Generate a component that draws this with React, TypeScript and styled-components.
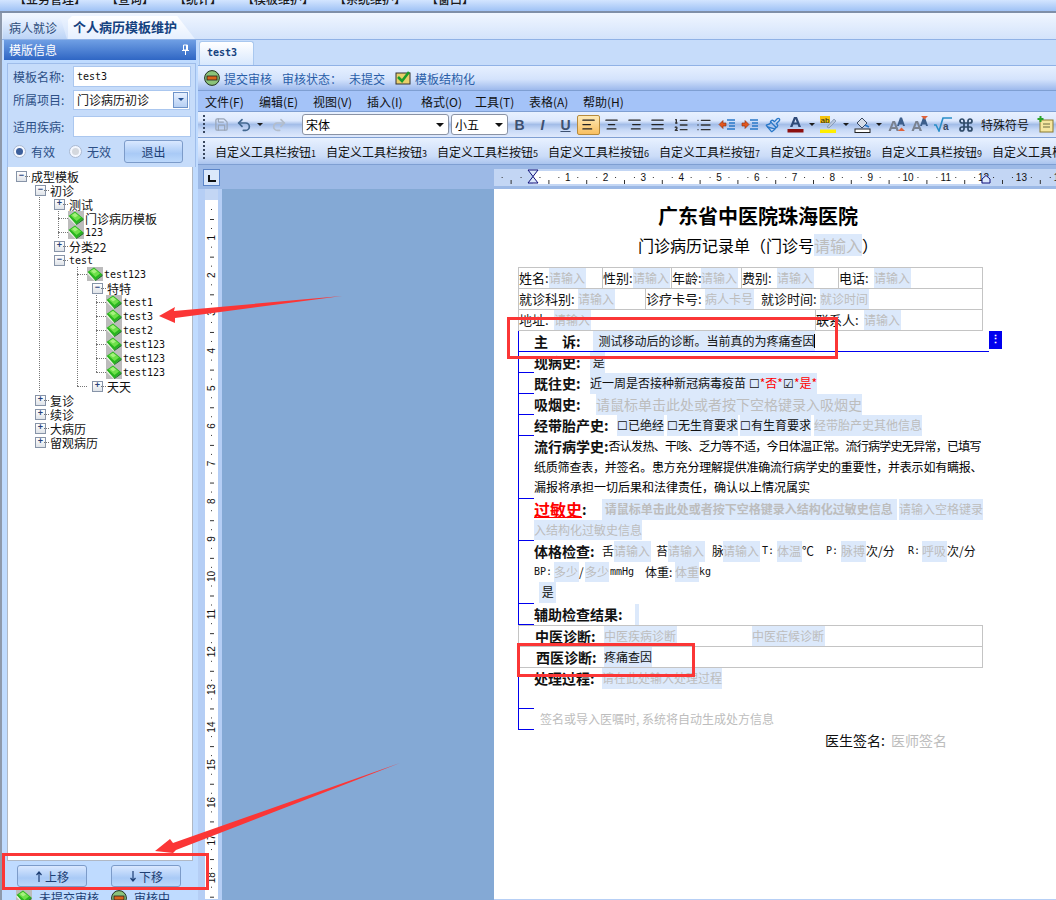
import React from "react";
import styled, { createGlobalStyle } from "styled-components";
import { AlignCenter, AlignJustify, AlignLeft, AlignRight, Command, List, ListOrdered, Paintbrush, Redo2, Save, Undo2 } from "lucide-react";

const CJK = `"Noto Sans CJK SC", "Liberation Sans", sans-serif`;
const MONO = `"DejaVu Sans Mono", "Liberation Mono", "Noto Sans CJK SC", monospace`;

const Global = createGlobalStyle`
  html, body { margin: 0; padding: 0; background: #fff; }
  body { font-family: ${CJK}; font-size: 12px; color: #000; }
  * { box-sizing: border-box; }
`;

const Shell = styled.div`
  position: relative; width: 1056px; height: 900px; overflow: hidden; background: #bfdbff;
`;
const TopMenu = styled.div`
  height: 13px; background: linear-gradient(#d3e5ff, #9fc2f5 85%, #7f8fa8 85%); display: flex; overflow: hidden;
  padding-left: 14px; align-items: flex-start;
`;
const TopItem = styled.span<{ $w: number }>`
  width: ${p => p.$w}px; flex: none; font-size: 12px; line-height: 16px; font-weight: 500; color: #1b1b1b;
  white-space: nowrap; margin-top: -9px;
`;
const Frame = styled.div`
  height: 887px; border-left: 2px solid #8e99ab; background: #bfdbff;
`;
const TabStrip = styled.div`
  height: 27px; display: flex; align-items: flex-end; padding-left: 1px;
  background: linear-gradient(#f0f6ff, #d3e3fb); border-bottom: 1px solid #90b2e6;
`;
const MainTab = styled.div<{ $active?: boolean }>`
  height: ${p => (p.$active ? 23 : 21)}px; padding-left: ${p => (p.$active ? 5 : 6)}px;
  width: ${p => (p.$active ? 127 : 64)}px; margin-right: 1px; white-space: nowrap;
  font-size: ${p => (p.$active ? 13 : 12)}px; font-weight: ${p => (p.$active ? 700 : 400)};
  line-height: ${p => (p.$active ? 21 : 19)}px; color: ${p => (p.$active ? "#15427f" : "#2b4a78")};
  background: ${p => (p.$active ? "linear-gradient(#ffffff, #e6f0ff)" : "linear-gradient(#eaf2ff, #bcd4f6)")};
  clip-path: polygon(0 100%, 0 4px, 4px 0, ${p => (p.$active ? "86%" : "90%")} 0, 100% 100%);
`;
const Main = styled.div`
  display: flex; height: 860px;
`;
const Sidebar = styled.aside`
  width: 192px; margin-left: 2px; display: flex; flex-direction: column; background: #bfdbff; flex: none;
`;
const PanelHead = styled.div`
  height: 20px; padding: 0 6px 0 5px; display: flex; align-items: center; justify-content: space-between;
  color: #fff; font-size: 12px; background: linear-gradient(#6f9fe4, #2f66c4);
`;
const Form = styled.div`
  margin: 3px 0 0 3px; height: 105px; border: 1px solid #9fbdea; border-bottom: 0; padding: 2px 0 0 5px;
  display: flex; flex-direction: column; background: #c6dcfa;
`;
const FormRow = styled.div<{ $h: number; $mt?: number }>`
  height: ${p => p.$h}px; margin-top: ${p => p.$mt ?? 0}px; display: flex; align-items: center;
`;
const FieldLabel = styled.label`
  width: 60px; flex: none; color: #2c4f86; font-size: 12px; white-space: nowrap;
`;
const TextInput = styled.div<{ $w?: number }>`
  width: ${p => p.$w ?? 118}px; height: 100%; background: #fff; border: 1px solid #abc7ef; padding-left: 3px;
  display: flex; align-items: center; justify-content: space-between; font-size: 12px; color: #111;
`;
const MonoValue = styled.span`
  font-family: ${MONO}; font-size: 10px; color: #111;
`;
const ComboArrow = styled.span`
  width: 15px; height: 16px; margin-right: 1px; border: 1px solid #6f93c8; display: flex; align-items: center; justify-content: center;
  background: linear-gradient(#e7f0ff, #b6cff3);
  &::after { content: ""; border: 3px solid transparent; border-top: 3px solid #234e90; margin-top: 3px; }
`;
const RadioLabel = styled.span<{ $w: number }>`
  width: ${p => p.$w}px; display: flex; align-items: center; gap: 5px; color: #2c4f86; font-size: 12px;
`;
const RadioDot = styled.span<{ $on?: boolean }>`
  width: 13px; height: 13px; border-radius: 50%; border: 1px solid #a9b9d2; display: flex; align-items: center; justify-content: center;
  background: #f3f7ff;
  &::after { content: ""; width: 7px; height: 7px; border-radius: 50%; background: ${p => (p.$on ? "#3c5f9c" : "#d4d8de")}; }
`;
const SideButton = styled.button<{ $w: number; $h: number }>`
  width: ${p => p.$w}px; height: ${p => p.$h}px; padding: 0; font-family: ${CJK}; font-size: 12px; color: #1e3f74;
  border: 1px solid #7c9bc9; border-radius: 3px; background: linear-gradient(#d9e8ff, #a9caf6 60%, #bcd8fb);
`;
const Tree = styled.div`
  margin: 0 0 0 3px; width: 186px; height: 694px; background: #fff; border: 1px solid #b0b8c4; border-top: 0; padding: 2px 0 0 3px; overflow: hidden; flex: none;
`;
const TreeRow = styled.div`
  height: 14px; display: flex; align-items: center;
`;
const Cell = styled.span<{ $v?: "I" | "T" | "L" | "" }>`
  position: relative; width: 19px; height: 14px; flex: none;
  ${p => (p.$v === "I" || p.$v === "T" ? "background: repeating-linear-gradient(#777 0 1px, transparent 1px 2px) 9px 0 / 1px 100% no-repeat;" : "")}
  ${p => (p.$v === "L" ? "background: repeating-linear-gradient(#777 0 1px, transparent 1px 2px) 9px 0 / 1px 50% no-repeat;" : "")}
  ${p => (p.$v === "T" || p.$v === "L" ? `&::after { content: ""; position: absolute; left: 9px; right: 0; top: 7px; border-top: 1px dotted #777; }` : "")}
`;
const Expander = styled.span<{ $open?: boolean }>`
  position: relative; width: 19px; height: 14px; flex: none;
  &::before {
    content: "${p => (p.$open ? "−" : "+")}"; position: absolute; left: 5px; top: 2px; width: 9px; height: 9px;
    border: 1px solid #8794a8; background: linear-gradient(#fff, #dfe3e8); color: #27407a;
    font: 700 9px/7px "Liberation Sans", sans-serif; text-align: center;
  }
  &::after { content: ""; position: absolute; left: 14px; right: 0; top: 7px; border-top: 1px dotted #777; }
`;
const NodeText = styled.span<{ $mono?: boolean }>`
  white-space: nowrap; margin-left: 1px; color: #111;
  font-family: ${p => (p.$mono ? MONO : CJK)}; font-size: ${p => (p.$mono ? 10 : 12)}px;
`;
const BottomBar = styled.div`
  height: 29px; display: flex; align-items: center; gap: 24px; padding: 1px 0 0 13px; flex: none;
`;
const Legend = styled.div`
  height: 10px; display: flex; align-items: flex-start; padding-left: 12px; overflow: visible; color: #1e3f74; font-size: 12px; line-height: 15px; flex: none;
`;
const LegendItem = styled.span<{ $w: number }>`
  width: ${p => p.$w}px; display: flex; gap: 7px; white-space: nowrap;
`;

const Editor = styled.section`
  margin-left: 2px; width: 858px; display: flex; flex-direction: column; flex: none; height: 860px;
`;
const DocTabs = styled.div`
  height: 26px; padding-left: 1px; display: flex; align-items: flex-end; background: #c6dcfa; border-bottom: 1px solid #90b2e6; flex: none;
`;
const DocTab = styled.div`
  width: 55px; height: 24px; border: 1px solid #a9c8ef; border-bottom: 0; border-radius: 3px 3px 0 0; background: linear-gradient(#ffffff, #d8e8fd);
  font: 700 10px/22px ${MONO}; color: #15427f; padding-left: 7px;
`;
const AuditBar = styled.div`
  height: 25px; display: flex; align-items: center; padding-left: 6px; background: linear-gradient(#e6f0ff, #d4e3fc 55%, #9db9ec); color: #2a5ea8; font-size: 12px; white-space: nowrap; flex: none; border-bottom: 1px solid #7f9fd2;
`;
const AuditText = styled.span<{ $ml: number }>`
  margin-left: ${p => p.$ml}px; color: #2a5ea8; display: flex;
`;
const MenuBar = styled.nav`
  height: 21px; background: #a4c3f8; display: flex; gap: 14px; padding-left: 7px; align-items: center; flex: none; border-bottom: 1px solid #7f9fd2; color: #111;
`;
const MenuItem = styled.span`
  width: 40px; white-space: nowrap; font-size: 12px;
`;
const Toolbar = styled.div`
  height: 26px; display: flex; align-items: center; flex: none; overflow: hidden; padding-left: 5px;
  background: linear-gradient(#e8f1ff 0, #dce8fd 35%, #a3bde8 50%, #c6d8f6 70%, #dfe9fc 100%); border-bottom: 1px solid #7f9fd2;
`;
const Toolbar3 = styled(Toolbar)`
  height: 27px; background: linear-gradient(#e8f1ff, #cbdcf8 70%, #aac4ee); gap: 10px;
`;
const Grip = styled.span<{ $mr: number }>`
  width: 2px; height: 20px; flex: none; margin-right: ${p => p.$mr}px;
  background: repeating-linear-gradient(#38475f 0 2px, transparent 2px 4px);
`;
const Tool = styled.span<{ $w?: number; $active?: boolean; $ml?: number }>`
  width: ${p => p.$w ?? 23}px; height: 20px; margin-left: ${p => p.$ml ?? 0}px; display: flex; align-items: center; justify-content: center; flex: none;
  ${p => (p.$active ? "background: linear-gradient(#fde9b5, #f9bf60); border: 1px solid #b68a3c; border-radius: 2px;" : "")}
`;
const ToolLetter = styled.span<{ $i?: boolean; $u?: boolean }>`
  font: ${p => (p.$i ? "italic 700" : "700")} 14px "Liberation Sans", sans-serif; color: #3d5070;
  text-decoration: ${p => (p.$u ? "underline" : "none")};
`;
const Drop = styled.span<{ $w?: number }>`
  width: ${p => p.$w ?? 10}px; flex: none; display: flex; justify-content: center;
  &::after { content: ""; border: 3px solid transparent; border-top: 3px solid #1c1c1c; margin-top: 3px; }
`;
const Combo = styled.div<{ $w: number; $mr: number }>`
  width: ${p => p.$w}px; height: 21px; margin-right: ${p => p.$mr}px; background: #fff; border: 1px solid #8a93a5; border-radius: 3px; display: flex; align-items: center; justify-content: space-between; padding: 0 4px 0 3px; font-size: 12px; flex: none;
  &::after { content: ""; border: 4px solid transparent; border-top: 4px solid #111; margin-top: 4px; }
`;
const CustomBtn = styled.span<{ $ml?: number }>`
  flex: none; white-space: nowrap; font-size: 12px; color: #111; margin-left: ${p => p.$ml ?? 0}px;
`;
const SmallDigit = styled.span`
  font-size: 9px;
`;
const RulerRow = styled.div`
  height: 24px; background: #9cb9e6; display: flex; align-items: center; padding-left: 5px; flex: none;
`;
const CornerBtn = styled.div`
  width: 17px; height: 17px; border: 1px solid #5b85c9; background: #dbe8fb; position: relative; margin-right: 274px; flex: none;
  &::after { content: ""; position: absolute; left: 4px; top: 5px; width: 6px; height: 5px; border-left: 2px solid #111; border-bottom: 2px solid #111; }
`;
const Body = styled.div`
  flex: 1; min-height: 0; display: flex; background: #b7cff5;
`;
const Gutter = styled.div`
  width: 7px; flex: none; background: #b5cef5;
`;
const VRuler = styled.div`
  width: 17px; flex: none; background: #b5cef5; padding-right: 4px; overflow: hidden; height: 710px;
`;
const Canvas = styled.div`
  flex: none; width: 272px; background: #84a9d5;
`;
const Page = styled.div`
  flex: 1; background: #fff; padding-left: 24px; padding-top: 17px; height: 710px; overflow: hidden;
`;
const Title = styled.h1`
  margin: 0; width: 480px; text-align: center; height: 20px; font: 700 20px/20px ${CJK}; color: #000;
`;
const Subtitle = styled.h2`
  margin: 8px 0 0; width: 480px; text-align: center; height: 22px; font: 400 16px/22px ${CJK}; color: #000;
`;
const Ph = styled.span<{ $w?: number; $bold?: boolean; $size?: number; $ml?: number }>`
  display: inline-block; height: 100%; background: #dce9fb; color: #bdbdbd; white-space: nowrap; text-align: left; flex: none;
  ${p => (p.$w ? `width: ${p.$w}px;` : "")}
  margin-left: ${p => p.$ml ?? 0}px;
  font-size: ${p => p.$size ?? 12}px; font-weight: ${p => (p.$bold ? 700 : 400)};
`;
const Hint = styled.span`
  margin-left: 6px; color: #bdbdbd; white-space: nowrap; font-size: 12px;
`;
const GridTable = styled.div<{ $mt?: number }>`
  width: 465px; margin-top: ${p => p.$mt ?? 11}px; border: 1px solid #c4c4c4; border-bottom: 0;
`;
const TR = styled.div`
  height: 21px; display: flex; border-bottom: 1px solid #c4c4c4; line-height: 20px;
`;
const TD = styled.div<{ $w?: number; $line?: boolean }>`
  ${p => (p.$w ? `width: ${p.$w}px; flex: none;` : "flex: 1;")}
  display: flex; height: 20px; overflow: visible;
  ${p => (p.$line ? "border-right: 1px solid #c4c4c4;" : "")}
`;
const Lab = styled.span<{ $w: number; $size?: number; $bold?: boolean; $ml?: number; $pl?: number }>`
  width: ${p => p.$w}px; flex: none; white-space: nowrap; font-size: ${p => p.$size ?? 13}px; font-weight: ${p => (p.$bold ? 700 : 400)}; color: #111;
  margin-left: ${p => p.$ml ?? 0}px; padding-left: ${p => p.$pl ?? 0}px;
`;
const Section = styled.div<{ $h: number }>`
  position: relative; width: 465px; height: ${p => p.$h}px; padding-left: 15px; border-left: 1px solid #0000ee; line-height: 20.6px;
  &::after { content: ""; position: absolute; left: 0; bottom: 0; width: 15px; border-bottom: 1px solid #0000ee; }
`;
const Line = styled.div<{ $tight?: number }>`
  display: flex; height: 20.6px; white-space: nowrap; letter-spacing: ${p => p.$tight ?? 0}px; font-size: 12px;
`;
const Head = styled.span<{ $w?: number }>`
  ${p => (p.$w ? `width: ${p.$w}px;` : "")} flex: none; white-space: nowrap; font-weight: 700; font-size: 14px; letter-spacing: 0; color: #111;
`;
const RedHead = styled.span`
  flex: none; font-weight: 700; font-size: 16px; color: #f00; text-decoration: underline; line-height: 20px;
`;
const Val = styled.span<{ $bg?: boolean; $red?: boolean; $ml?: number; $mono?: boolean; $w?: number }>`
  display: inline-block; flex: none; margin-left: ${p => p.$ml ?? 0}px; color: ${p => (p.$red ? "#f00" : "#111")};
  ${p => (p.$bg ? "background: #dce9fb;" : "")}
  ${p => (p.$w ? `width: ${p.$w}px;` : "")}
  ${p => (p.$mono ? `font-family: ${MONO}; font-size: 10px;` : "")}
`;
const ActiveBar = styled.div`
  position: absolute; left: 0; top: 0; height: 21px; width: 470px; border-bottom: 1px solid #0000ee; pointer-events: none;
`;
const FocusHandle = styled.div`
  position: absolute; left: 470px; top: 0; width: 13px; height: 18px; background: #0000ee; color: #fff; font: 700 11px/16px "Liberation Sans", sans-serif; text-align: center;
`;
const Caret = styled.span`
  display: inline-block; width: 1px; height: 14px; background: #000; vertical-align: -2px;
`;
const SignLine = styled.div`
  display: flex; width: 465px; height: 22px; margin-top: -1px; padding-left: 307px; font-size: 14px; line-height: 22px; color: #111; white-space: nowrap;
`;
const SignHint = styled.span`
  margin-left: 6px; color: #bdbdbd;
`;
const RedFrame = styled.div<{ $x: number; $y: number; $w: number; $h: number }>`
  position: absolute; left: ${p => p.$x}px; top: ${p => p.$y}px; width: ${p => p.$w}px; height: ${p => p.$h}px; border: 3px solid #fb3636; pointer-events: none;
`;
const ArrowLayer = styled.svg`
  position: absolute; left: 0; top: 0; pointer-events: none;
`;

const Book = () => (
  <svg width="16" height="14" viewBox="0 0 16 14" style={{ flex: "none" }}>
    <rect width="16" height="14" fill="#bcbcbc" />
    <polygon points="0.5,5 7,0.5 15.5,7.5 8,13.5" fill="#29b51f" />
    <polygon points="2.5,4.5 7,1.5 13,6.5 8.5,10" fill="#6ee04a" />
    <polygon points="4,4 7,2 10,4.5 7,6.5" fill="#a6f07e" />
    <polygon points="0.5,5 8,13.5 7.5,14 0.5,7" fill="#eef7e6" />
    <polygon points="8,13.5 15.5,7.5 15.5,9 8.5,14" fill="#12751a" />
  </svg>
);
const StopBadge = ({ s = 16 }: { s?: number }) => (
  <svg width={s} height={s} viewBox="0 0 16 16" style={{ flex: "none" }}>
    <circle cx="8" cy="8" r="7.4" fill="#8bc37a" stroke="#1f2f1f" />
    <rect x="3" y="6" width="10" height="4" fill="#d8641a" stroke="#222" strokeWidth="0.8" />
  </svg>
);
const CheckDoc = () => (
  <svg width="16" height="16" viewBox="0 0 16 16" style={{ flex: "none" }}>
    <rect x="1" y="3" width="14" height="11" fill="#e9cf6a" stroke="#333" />
    <path d="M3 7 L7 11 L14 2" fill="none" stroke="#1c9c2a" strokeWidth="2.6" />
  </svg>
);
const Pin = () => (
  <svg width="9" height="11" viewBox="0 0 9 11"><path d="M2.5 1H6.5V6H2.5ZM1 6.5H8M4.5 7V11M5.5 1V6" fill="none" stroke="#fff" /></svg>
);
const Arrow = ({ up }: { up?: boolean }) => (
  <svg width="8" height="11" viewBox="0 0 8 11" style={{ marginRight: 2 }}>
    <path d={up ? "M4 11V2M1.5 4L4 1L6.5 4" : "M4 0V9M1.5 7L4 10L6.5 7"} stroke="#1e3f74" strokeWidth="1.2" fill="none" />
  </svg>
);
const Ind = ({ flip }: { flip?: boolean }) => (
  <svg width="18" height="14" viewBox="0 0 18 14">
    <path d="M9 2H17M11 5H17M11 8H17M9 11H17" stroke="#2a78c8" strokeWidth="1.3" />
    <path d={flip ? "M1 5H4V2.5L8 6.5L4 10.5V8H1Z" : "M8 5H5V2.5L1 6.5L5 10.5V8H8Z"} fill="#e2561e" stroke="#8a2c0a" strokeWidth="0.6" />
  </svg>
);
const FontColor = () => (
  <svg width="17" height="17" viewBox="0 0 17 17">
    <path d="M3 11L7 1H10L14 11H11.5L10.6 8.5H6.4L5.5 11ZM7.2 6.5H9.8L8.5 3Z" fill="#2f4a78" />
    <rect x="0.5" y="13" width="16" height="3.5" fill="#8c0f0f" />
  </svg>
);
const Highlight = () => (
  <svg width="17" height="17" viewBox="0 0 17 17">
    <rect x="0" y="0" width="10" height="7" fill="#f4c20d" />
    <text x="0.5" y="7" fontSize="8" fontFamily="Liberation Sans" fill="#222">ab</text>
    <path d="M7 11L14 3L16 5L9 12Z" fill="#b8c7de" stroke="#6d7f9c" strokeWidth="0.6" />
    <rect x="0" y="13.5" width="16" height="3.5" fill="#ffee00" />
  </svg>
);
const PaintBucket = () => (
  <svg width="17" height="17" viewBox="0 0 17 17">
    <path d="M3 7L8 2L13 7L8 12Z" fill="#d6dde8" stroke="#3a4a62" />
    <path d="M11 9L15 11" stroke="#2a78c8" strokeWidth="1.6" />
    <rect x="1" y="13" width="15" height="3.5" fill="#fff" stroke="#222" />
  </svg>
);
const GrowA = ({ down }: { down?: boolean }) => (
  <svg width="18" height="17" viewBox="0 0 18 17">
    <path d="M0.5 15L4.5 5H7L11 15H8.6L7.9 13H3.6L2.9 15ZM4.3 11H7.2L5.8 7Z" fill="#7a8290" />
    <path d="M9 10L12 1.5H14L17 10H15L14.6 8.5H11.4L11 10Z" fill="#3d5f8c" />
    <path d={down ? "M10 0H17L13.5 3.5Z" : "M10 15L13.5 11.5L17 15Z"} fill="#e0623a" />
  </svg>
);
const Sqrt = () => (
  <svg width="18" height="15" viewBox="0 0 18 15">
    <path d="M0 8H2L5 14L9 1H18" fill="none" stroke="#2a8ec8" strokeWidth="1.6" />
    <text x="9" y="13" fontSize="10" fontWeight="700" fontFamily="Liberation Sans" fill="#3a4a62">a</text>
  </svg>
);
const Note = () => (
  <svg width="17" height="17" viewBox="0 0 17 17">
    <rect x="3" y="4" width="13" height="12" fill="#f6e7a0" stroke="#8a7a30" />
    <path d="M6 8H13M6 11H13" stroke="#6c6c40" />
    <path d="M0.5 3H6.5M3.5 0V6" stroke="#29a329" strokeWidth="2" />
  </svg>
);

const HRuler = () => {
  const items = [];
  for (let i = -1; i <= 14; i++) {
    const x = 36 + 37.8 * i;
    if (i > 0) items.push(<text key={`n${i}`} x={x} y="12" fontSize="10" textAnchor="middle" fontFamily="Liberation Sans" fill="#111">{i}</text>);
    [9.45, 18.9, 28.35].forEach((d, k) => {
      if (k === 1) items.push(<rect key={`t${i}${k}`} x={x + d - 0.5} y="11" width="1" height="4" fill="#333" />);
      else items.push(<rect key={`t${i}${k}`} x={x + d} y="8" width="1" height="1" fill="#333" />);
    });
  }
  return (
    <svg width="562" height="17" viewBox="0 0 562 17" style={{ flex: "none" }}>
      <rect width="562" height="17" fill="#c3d6f4" />
      <rect x="39" y="2" width="448" height="13" fill="#fff" />
      {items}
      <path d="M34 1H44L39 7.5L44 14H34L39 7.5Z" fill="#dbe8fb" stroke="#10107a" />
      <path d="M488 14H496V10L492 6.5L488 10Z" fill="#dbe8fb" stroke="#10107a" />
    </svg>
  );
};
const VerticalRuler = () => {
  const items = [];
  for (let i = 0; i <= 18; i++) {
    const y = 11 + 37.65 * i;
    if (i > 0) items.push(<text key={`n${i}`} transform={`translate(10 ${y}) rotate(-90)`} fontSize="10" textAnchor="middle" fontFamily="Liberation Sans" fill="#111">{i}</text>);
    items.push(<rect key={`a${i}`} x="6" y={y + 9} width="1" height="1" fill="#333" />);
    items.push(<rect key={`b${i}`} x="5" y={y + 19} width="4" height="1" fill="#333" />);
    items.push(<rect key={`c${i}`} x="6" y={y + 28} width="1" height="1" fill="#333" />);
  }
  return (
    <svg width="13" height="710" viewBox="0 0 13 710" style={{ display: "block" }}>
      <rect width="13" height="710" fill="#fff" />
      <rect width="13" height="11" fill="#c3d6f4" />
      {items}
    </svg>
  );
};

type V = "I" | "T" | "L" | "";
type Node = { g: V[]; exp?: "o" | "c"; leaf?: boolean; t: string; mono?: boolean };
const nodes: Node[] = [
  { g: [], exp: "o", t: "成型模板" },
  { g: [""], exp: "o", t: "初诊" },
  { g: ["", "I"], exp: "c", t: "测试" },
  { g: ["", "I", "T"], leaf: true, t: "门诊病历模板" },
  { g: ["", "I", "T"], leaf: true, t: "123", mono: true },
  { g: ["", "I"], exp: "c", t: "分类22" },
  { g: ["", "I"], exp: "o", t: "test", mono: true },
  { g: ["", "I", "", "T"], leaf: true, t: "test123", mono: true },
  { g: ["", "I", "", "I"], exp: "o", t: "特特" },
  { g: ["", "I", "", "I", "T"], leaf: true, t: "test1", mono: true },
  { g: ["", "I", "", "I", "T"], leaf: true, t: "test3", mono: true },
  { g: ["", "I", "", "I", "T"], leaf: true, t: "test2", mono: true },
  { g: ["", "I", "", "I", "T"], leaf: true, t: "test123", mono: true },
  { g: ["", "I", "", "I", "T"], leaf: true, t: "test123", mono: true },
  { g: ["", "I", "", "I", "L"], leaf: true, t: "test123", mono: true },
  { g: ["", "I", "", "L"], exp: "c", t: "天天" },
  { g: [""], exp: "c", t: "复诊" },
  { g: [""], exp: "c", t: "续诊" },
  { g: [""], exp: "c", t: "大病历" },
  { g: [""], exp: "c", t: "留观病历" },
];

export default function App() {
  return (
    <Shell>
      <Global />
      <TopMenu>
        <TopItem $w={92}>【业务管理】</TopItem>
        <TopItem $w={68}>【查询】</TopItem>
        <TopItem $w={68}>【统计】</TopItem>
        <TopItem $w={92}>【模板维护】</TopItem>
        <TopItem $w={92}>【系统维护】</TopItem>
        <TopItem $w={60}>【窗口】</TopItem>
      </TopMenu>
      <Frame>
        <TabStrip>
          <MainTab>病人就诊</MainTab>
          <MainTab $active>个人病历模板维护</MainTab>
        </TabStrip>
        <Main>
          <Sidebar>
            <PanelHead>模版信息<Pin /></PanelHead>
            <Form>
              <FormRow $h={21}><FieldLabel>模板名称:</FieldLabel><TextInput><MonoValue>test3</MonoValue></TextInput></FormRow>
              <FormRow $h={20} $mt={3}><FieldLabel>所属项目:</FieldLabel><TextInput $w={117}>门诊病历初诊<ComboArrow /></TextInput></FormRow>
              <FormRow $h={21} $mt={6}><FieldLabel>适用疾病:</FieldLabel><TextInput /></FormRow>
              <FormRow $h={23} $mt={3}>
                <RadioLabel $w={56}><RadioDot $on />有效</RadioLabel>
                <RadioLabel $w={55}><RadioDot />无效</RadioLabel>
                <SideButton $w={59} $h={23}>退出</SideButton>
              </FormRow>
            </Form>
            <Tree>
              {nodes.map((n, i) => (
                <TreeRow key={i}>
                  {n.g.map((v, k) => <Cell key={k} $v={v} />)}
                  {n.exp && <Expander $open={n.exp === "o"} />}
                  {n.leaf && <Book />}
                  <NodeText $mono={n.mono}>{n.t}</NodeText>
                </TreeRow>
              ))}
            </Tree>
            <BottomBar>
              <SideButton $w={70} $h={22}><Arrow up />上移</SideButton>
              <SideButton $w={70} $h={22}><Arrow />下移</SideButton>
            </BottomBar>
            <Legend>
              <LegendItem $w={95}><Book />未提交审核</LegendItem>
              <LegendItem $w={70}><StopBadge />审核中</LegendItem>
            </Legend>
          </Sidebar>
          <Editor>
            <DocTabs><DocTab>test3</DocTab></DocTabs>
            <AuditBar>
              <StopBadge />
              <AuditText $ml={4}>提交审核</AuditText>
              <AuditText $ml={10}>审核状态：</AuditText>
              <AuditText $ml={7}>未提交</AuditText>
              <AuditText $ml={10}><CheckDoc /></AuditText>
              <AuditText $ml={4}>模板结构化</AuditText>
            </AuditBar>
            <MenuBar>
              {["文件(F)", "编辑(E)", "视图(V)", "插入(I)", "格式(O)", "工具(T)", "表格(A)", "帮助(H)"].map(m => <MenuItem key={m}>{m}</MenuItem>)}
            </MenuBar>
            <Toolbar>
              <Grip $mr={7} />
              <Tool $w={19}><Save size={15} color="#9aa6b8" /></Tool>
              <Tool $w={26}><Undo2 size={16} color="#42678f" strokeWidth={2.6} /></Tool>
              <Drop $w={6} />
              <Tool $w={32}><Redo2 size={16} color="#b3bdcb" strokeWidth={2.6} /></Tool>
              <Tool $w={7} />
              <Combo $w={147} $mr={2}>宋体</Combo>
              <Combo $w={57} $mr={0}>小五</Combo>
              <Tool><ToolLetter>B</ToolLetter></Tool>
              <Tool><ToolLetter $i>I</ToolLetter></Tool>
              <Tool><ToolLetter $u>U</ToolLetter></Tool>
              <Tool $active><AlignLeft size={15} color="#222" /></Tool>
              <Tool><AlignCenter size={15} color="#222" /></Tool>
              <Tool><AlignRight size={15} color="#222" /></Tool>
              <Tool><AlignJustify size={15} color="#222" /></Tool>
              <Tool><ListOrdered size={16} color="#333" /></Tool>
              <Tool><List size={16} color="#333" /></Tool>
              <Tool><Ind /></Tool>
              <Tool><Ind flip /></Tool>
              <Tool><Paintbrush size={16} color="#2a78c8" /></Tool>
              <Tool><FontColor /></Tool>
              <Drop $w={10} />
              <Tool><Highlight /></Tool>
              <Drop $w={12} />
              <Tool $w={21}><PaintBucket /></Tool>
              <Drop $w={12} />
              <Tool><GrowA /></Tool>
              <Tool><GrowA down /></Tool>
              <Tool><Sqrt /></Tool>
              <Tool><Command size={16} color="#2f4a68" strokeWidth={2.6} /></Tool>
              <CustomBtn $ml={4}>特殊符号</CustomBtn>
              <Tool $ml={5}><Note /></Tool>
            </Toolbar>
            <Toolbar3>
              <Grip $mr={0} />
              {["1", "3", "5", "6", "7", "8", "9", "10"].map(n => (
                <CustomBtn key={n}>自定义工具栏按钮<SmallDigit>{n}</SmallDigit></CustomBtn>
              ))}
            </Toolbar3>
            <RulerRow><CornerBtn /><HRuler /></RulerRow>
            <Body>
              <Gutter />
              <VRuler><VerticalRuler /></VRuler>
              <Canvas />
              <Page>
                <Title>广东省中医院珠海医院</Title>
                <Subtitle>门诊病历记录单（门诊号<Ph $size={16}>请输入</Ph>）</Subtitle>
                <GridTable>
                  <TR>
                    <TD $w={84} $line><Lab $w={30}>姓名:</Lab><Ph $w={37}>请输入</Ph></TD>
                    <TD $w={69} $line><Lab $w={30}>性别:</Lab><Ph $w={37}>请输入</Ph></TD>
                    <TD $w={70} $line><Lab $w={29}>年龄:</Lab><Ph $w={37}>请输入</Ph></TD>
                    <TD $w={97} $line><Lab $w={35}>费别:</Lab><Ph $w={37}>请输入</Ph></TD>
                    <TD><Lab $w={35}>电话:</Lab><Ph $w={37}>请输入</Ph></TD>
                  </TR>
                  <TR>
                    <TD $w={127} $line><Lab $w={59}>就诊科别:</Lab><Ph $w={37}>请输入</Ph></TD>
                    <TD>
                      <Lab $w={59}>诊疗卡号:</Lab><Ph $w={49}>病人卡号</Ph>
                      <Lab $w={59} $ml={7}>就诊时间:</Lab><Ph $w={49}>就诊时间</Ph>
                    </TD>
                  </TR>
                  <TR>
                    <TD $w={297} $line><Lab $w={35}>地址:</Lab><Ph $w={37}>请输入</Ph></TD>
                    <TD><Lab $w={48}>联系人:</Lab><Ph $w={37}>请输入</Ph></TD>
                  </TR>
                </GridTable>
                <Section $h={21}>
                  <ActiveBar />
                  <FocusHandle>⋮</FocusHandle>
                  <Line><Head $w={59}>主　诉:</Head><Val $bg>&nbsp;&nbsp;测试移动后的诊断。当前真的为疼痛查因<Caret /></Val></Line>
                </Section>
                <Section $h={21}><Line><Head $w={56}>现病史:</Head><Val $bg>&nbsp;是</Val></Line></Section>
                <Section $h={21}><Line><Head $w={56}>既往史:</Head><Val $bg>近一周是否接种新冠病毒疫苗 ☐<Val $red>*否*</Val>☑<Val $red>*是*</Val></Val></Line></Section>
                <Section $h={21}><Line><Head $w={62}>吸烟史:</Head><Ph $size={14}>请鼠标单击此处或者按下空格键录入吸烟史</Ph></Line></Section>
                <Section $h={21}><Line><Head $w={83}>经带胎产史:</Head><Val $bg>☐已绝经</Val><Val $bg $ml={3}>☐无生育要求</Val><Val $bg $ml={2}>☐有生育要求</Val><Ph $ml={3}>经带胎产史其他信息</Ph></Line></Section>
                <Section $h={63}>
                  <Line $tight={-0.72}><Head>流行病学史:</Head>否认发热、干咳、乏力等不适，今日体温正常。流行病学史无异常，已填写</Line>
                  <Line $tight={-0.2}>纸质筛查表，并签名。患方充分理解提供准确流行病学史的重要性，并表示如有瞒报、</Line>
                  <Line>漏报将承担一切后果和法律责任，确认以上情况属实</Line>
                </Section>
                <Section $h={42}>
                  <Line><RedHead>过敏史</RedHead><Head $w={20}>:</Head><Ph $bold $w={295}>&nbsp;请鼠标单击此处或者按下空格键录入结构化过敏史信息</Ph><Ph $ml={2}>请输入空格键录</Ph></Line>
                  <Line><Ph>入结构化过敏史信息</Ph></Line>
                </Section>
                <Section $h={63}>
                  <Line>
                    <Head $w={68}>体格检查:</Head><Val $w={12}>舌</Val><Ph $w={37}>请输入</Ph><Val $ml={5} $w={12}>苔</Val><Ph $w={37}>请输入</Ph><Val $ml={7} $w={11}>脉</Val><Ph $w={37}>请输入</Ph>
                    <Val $mono $ml={2} $w={15}>T:</Val><Ph $w={25}>体温</Ph><Val $w={24}>℃</Val><Val $mono $w={15}>P:</Val><Ph $w={25}>脉搏</Ph><Val $w={42}>次/分</Val><Val $mono $w={14}>R:</Val><Ph $w={25}>呼吸</Ph><Val>次/分</Val>
                  </Line>
                  <Line>
                    <Val $mono $w={20}>BP:</Val><Ph $w={25}>多少</Ph><Val $w={6}>/</Val><Ph $w={24}>多少</Ph><Val $mono $ml={1} $w={35}>mmHg</Val><Val $w={30}>体重:</Val><Ph $w={24}>体重</Ph><Val $mono>kg</Val>
                  </Line>
                  <Line><Val $bg $ml={5}>&nbsp;是&nbsp;</Val></Line>
                </Section>
                <Section $h={21}><Line><Head $w={93}>辅助检查结果:</Head><Ph $w={4} $ml={8} /></Line></Section>
                <GridTable $mt={0}>
                  <TR>
                    <TD><Lab $w={85} $size={14} $bold $pl={16}>中医诊断:</Lab><Ph $w={73}>中医疾病诊断</Ph><Ph $ml={75} $w={73}>中医症候诊断</Ph></TD>
                  </TR>
                  <TR>
                    <TD><Lab $w={85} $size={14} $bold $pl={17}>西医诊断:</Lab><Val $bg>疼痛查因</Val></TD>
                  </TR>
                </GridTable>
                <Section $h={41}><Line><Head $w={68}>处理过程:</Head><Ph>请在此处输入处理过程</Ph></Line></Section>
                <Section $h={21}><Line><Hint>签名或导入医嘱时, 系统将自动生成处方信息</Hint></Line></Section>
                <SignLine>医生签名: <SignHint>医师签名</SignHint></SignLine>
              </Page>
            </Body>
          </Editor>
        </Main>
      </Frame>

      <RedFrame $x={507} $y={317} $w={331} $h={42} />
      <RedFrame $x={517} $y={643} $w={178} $h={34} />
      <RedFrame $x={2} $y={853} $w={207} $h={37} />
      <ArrowLayer width="1056" height="900" viewBox="0 0 1056 900">
        <polygon points="159,316 175,307 174,311 342,296 175,318 175,323" fill="#fb3636" />
        <polygon points="155,851 170,839 173,843 400,763 176,850 173,853" fill="#fb3636" />
      </ArrowLayer>
    </Shell>
  );
}
